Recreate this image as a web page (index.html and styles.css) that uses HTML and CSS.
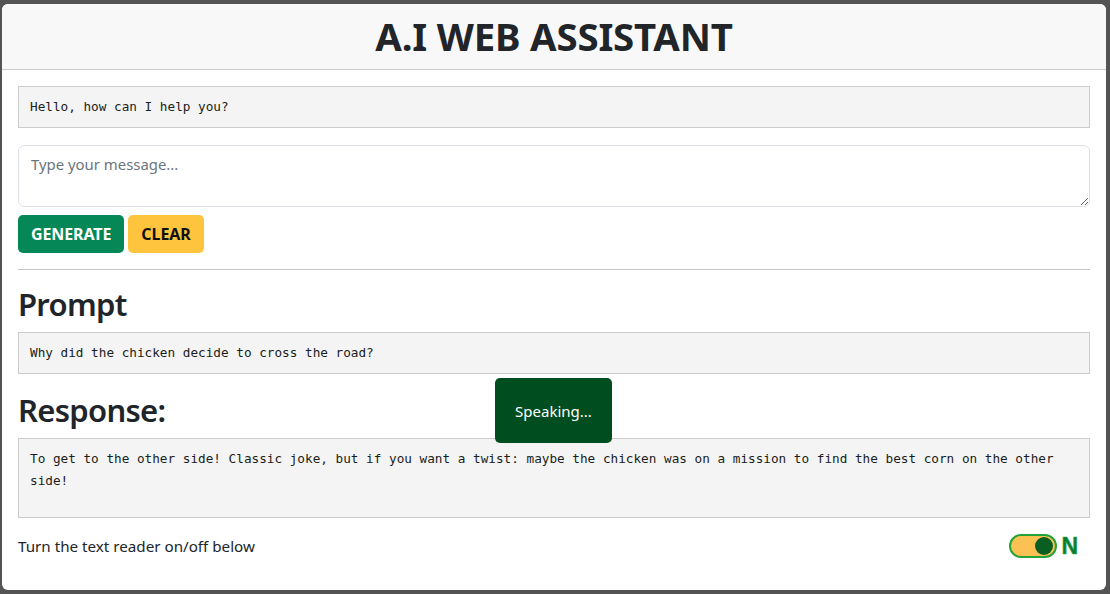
FILE: index.html
```html
<!DOCTYPE html>
<html lang="en">
<head>
<meta charset="utf-8">
<title>A.I Web Assistant</title>
<link rel="stylesheet" href="styles.css">
</head>
<body>
<div class="card">
  <header class="card-header">
    <h1 class="title">A.I WEB ASSISTANT</h1>
  </header>
  <main class="card-body">
    <div class="mono-box">Hello, how can I help you?</div>
    <textarea class="message" rows="2" placeholder="Type your message..."></textarea>
    <div class="actions">
      <button class="btn btn-generate">GENERATE</button>
      <button class="btn btn-clear">CLEAR</button>
    </div>
    <hr class="divider">
    <h2 class="section-title">Prompt</h2>
    <div class="mono-box">Why did the chicken decide to cross the road?</div>
    <h2 class="section-title response-title">Response:</h2>
    <div class="mono-box response">To get to the other side! Classic joke, but if you want a twist: maybe the chicken was on a mission to find the best corn on the other side!</div>
    <div class="reader-row">
      <span class="reader-label">Turn the text reader on/off below</span>
      <label class="toggle">
        <span class="switch"><span class="knob"></span></span>
        <span class="toggle-text">N</span>
      </label>
    </div>
  </main>
  <div class="toast">Speaking...</div>
</div>
</body>
</html>
```
FILE: styles.css
```css
* { box-sizing: border-box; }

html, body { height: 100%; }

body {
  margin: 0;
  padding: 4px 4px 4px 2px;
  background: #545454;
  font-family: "Noto Sans", "Open Sans", sans-serif;
  color: #212529;
}

.card {
  position: relative;
  min-height: 586px;
  background: #fff;
  border-radius: 6px;
  overflow: hidden;
}

.card-header {
  height: 66px;
  background: #f8f8f8;
  border-bottom: 1px solid #cccccc;
  display: flex;
  align-items: center;
  justify-content: center;
}

.title {
  margin: 0;
  font-size: 38.4px;
  font-weight: 700;
  line-height: 1;
  letter-spacing: -0.2px;
  color: #212529;
}

.card-body {
  padding: 16px;
}

.mono-box {
  background: #f4f4f4;
  border: 1px solid #cccccc;
  padding: 12px 11px;
  font-family: "DejaVu Sans Mono", monospace;
  font-size: 12.7px;
  line-height: 16px;
  color: #1a1d20;
  white-space: pre-wrap;
}

.mono-box.response {
  min-height: 80px;
  line-height: 22px;
  padding-top: 9px;
}

.message {
  display: block;
  width: 100%;
  height: 62px;
  margin-top: 17px;
  padding: 6px 12px;
  border: 1px solid #dee2e6;
  border-radius: 6px;
  font-family: "Noto Sans", "Open Sans", sans-serif;
  font-size: 14.9px;
  line-height: 24px;
  color: #212529;
  resize: vertical;
}

.message::placeholder { color: #6c757d; }

.actions {
  display: flex;
  gap: 4px;
  margin-top: 8px;
}

.btn {
  height: 38px;
  padding: 0 13px;
  border: 0;
  border-radius: 5px;
  font-family: "Noto Sans", "Open Sans", sans-serif;
  font-size: 16px;
  font-weight: 700;
  letter-spacing: -0.1px;
}

.btn-generate { background: #068757; color: #fff; }
.btn-clear { background: #ffc43d; color: #111; }

.divider {
  margin: 16px 0 0;
  border: 0;
  border-top: 1px solid #c6c6c6;
}

.section-title {
  margin: 16px 0 9px;
  font-size: 31px;
  font-weight: 600;
  line-height: 37px;
  letter-spacing: -0.7px;
}

.response-title {
  margin-top: 18px;
}

.reader-row {
  display: flex;
  align-items: center;
  justify-content: space-between;
  margin-top: 16px;
  height: 24px;
}

.reader-label {
  font-size: 15.2px;
}

.toggle {
  display: flex;
  align-items: center;
  gap: 4px;
  margin-right: 12px;
}

.switch {
  width: 48px;
  height: 24px;
  border: 2px solid #23a33a;
  border-radius: 12px;
  background: #fbc152;
  display: flex;
  align-items: center;
  justify-content: flex-end;
  padding: 0 2px;
}

.knob {
  width: 18px;
  height: 18px;
  border-radius: 50%;
  background: #0b5e22;
}

.toggle-text {
  font-family: "Liberation Sans", Arial, sans-serif;
  font-size: 23px;
  font-weight: 700;
  color: #0a7a32;
  -webkit-text-stroke: 0.6px #29a84a;
  line-height: 1;
}

.toast {
  position: absolute;
  left: 493px;
  top: 374px;
  width: 117px;
  height: 65px;
  background: #004d1f;
  border-radius: 5px;
  color: #fff;
  font-size: 15px;
  display: flex;
  align-items: center;
  justify-content: center;
}
```
